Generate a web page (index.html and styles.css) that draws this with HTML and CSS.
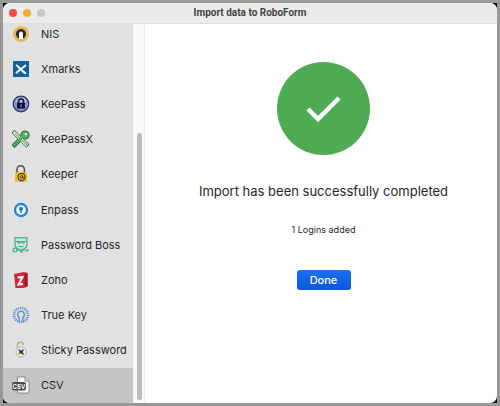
FILE: index.html
```
<!DOCTYPE html>
<html lang="en">
<head>
    <meta charset="UTF-8">
    <meta name="viewport" content="width=device-width, initial-scale=1.0">
    <title>Import data to RoboForm</title>
    <link rel="stylesheet" href="styles.css">
</head>
<body>
    <div class="backdrop">
        <div class="window">
            <header class="titlebar">
                <div class="controls">
                    <button class="dot close" aria-label="Close"></button>
                    <button class="dot minimize" aria-label="Minimize"></button>
                    <button class="dot zoom" aria-label="Zoom" disabled></button>
                </div>
                <h1 class="title">Import data to RoboForm</h1>
            </header>
            <div class="panes">
                <nav class="sidebar">
                    <div class="sources">
                        <a href="#" class="source">
                            <svg class="icon" viewBox="0 0 18 18"><circle cx="9" cy="9" r="8" fill="#edb55b"/><circle cx="9" cy="9" r="5" fill="#26272b"/><path d="M7 14V8.500a2 2 0 0 1 4 0V14z" fill="#fff"/></svg>
                            <span>NIS</span>
                        </a>
                        <a href="#" class="source">
                            <svg class="icon" viewBox="0 0 18 18"><path d="M1 1h16v16H1z" fill="#0c629b"/><path d="M4 5q1.500 1 5 4.500T14 13.500M4 13.500q1.500-2 5-4.500T14 5" fill="none" stroke="#fff" stroke-width="2"/></svg>
                            <span>Xmarks</span>
                        </a>
                        <a href="#" class="source">
                            <svg class="icon" viewBox="0 0 18 18"><circle cx="9" cy="9" r="7.800" fill="#8191d6" stroke="#35375a" stroke-width="1.200"/><path d="M3 7a6.300 6.300 0 0 1 12 0z" fill="#aeb9ea"/><path d="M6.500 8.500V6.500a2.500 2.500 0 0 1 5 0v2" fill="none" stroke="#10142e" stroke-width="1.600"/><path d="M5 8h8v5.500H5z" fill="#10142e"/><path d="M9 9.500v2.500" stroke="#9aa7e4"/></svg>
                            <span>KeePass</span>
                        </a>
                        <a href="#" class="source">
                            <svg class="icon" viewBox="0 0 18 18"><path d="M1 1.500l15 14.500M1 16.500l10-10" stroke="#3a5a40" stroke-width="4.400"/><circle cx="13" cy="5" r="4.600" fill="#3a5a40"/><path d="M1.700 2.200l13.600 13.200" stroke="#e2efe0" stroke-width="3"/><path d="M3 3.500l12 11.500" stroke="#4b9a52" stroke-width="1"/><path d="M1.700 15.800l10-10" stroke="#49b257" stroke-width="2.800"/><circle cx="13" cy="5" r="3.600" fill="#55b862"/><circle cx="14" cy="4" r="1.200" fill="#e4f3e2"/></svg>
                            <span>KeePassX</span>
                        </a>
                        <a href="#" class="source">
                            <svg class="icon" viewBox="0 0 18 18"><path d="M5 8V4.500a3.700 3.700 0 0 1 7.400 0V8" fill="none" stroke="#4b4b45" stroke-width="1.500"/><path d="M3 7.500h12V17H3z" fill="#f5bd20"/><circle cx="9.500" cy="12" r="3.600" fill="none" stroke="#4d3c0c" stroke-width="1.200"/><circle cx="9.300" cy="12" r="1.300" fill="none" stroke="#4d3c0c"/><path d="M10.800 10.500v2.500h1.500" fill="none" stroke="#4d3c0c"/></svg>
                            <span>Keeper</span>
                        </a>
                        <a href="#" class="source">
                            <svg class="icon" viewBox="0 0 18 18"><circle cx="9" cy="9" r="6" fill="#f5fafe" stroke="#1d84dc" stroke-width="2.300"/><circle cx="9" cy="7.800" r="2" fill="#1d74c4"/><path d="M9 8v4" stroke="#1d74c4" stroke-width="1.600"/></svg>
                            <span>Enpass</span>
                        </a>
                        <a href="#" class="source">
                            <svg class="icon" viewBox="0 0 18 18"><g fill="none" stroke="#3fae85" stroke-width="1.200"><path d="M3 1.500q3 1 6 0q3 1 6 0v7q0 4-6 5.500q-6-1.500-6-5.500z" fill="#d2e8de"/><path d="M3.500 5.500h11M6 5.500v1.500h2V5.500M10 5.500v1.500h2V5.500M6.500 10q2.500 1.500 5 0"/><circle cx="3" cy="14" r="1.900"/><path d="M5 14h3l1.500 2.500L11 14h6M15 14v2"/></g></svg>
                            <span>Password Boss</span>
                        </a>
                        <a href="#" class="source">
                            <svg class="icon" viewBox="0 0 18 18"><path d="M2 3l10-2 3.500 1v13L12 17H3.500z" fill="#d52436"/><path d="M12.500 3l3-1v13L13 16.500z" fill="#9d1424"/><path d="M5.500 6.500l5-.5-4 7.500 4.500-.5" fill="none" stroke="#fff" stroke-width="2"/></svg>
                            <span>Zoho</span>
                        </a>
                        <a href="#" class="source">
                            <svg class="icon" viewBox="0 0 18 18"><g fill="none" stroke="#5b93cd"><circle cx="9" cy="9" r="7" stroke-width="2.600" stroke-dasharray="1.100 .9"/><path d="M7.200 16V11.500a3.400 3.400 0 1 1 3.600 0V16" stroke-width="1.500"/></g></svg>
                            <span>True Key</span>
                        </a>
                        <a href="#" class="source">
                            <svg class="icon" viewBox="0 0 18 18"><path d="M5.500 7V4.500a3 3 0 0 1 6-.5" fill="none" stroke="#bda98d" stroke-width="1.400"/><circle cx="9" cy="11" r="5" fill="#f8fafb" stroke="#a5b1bb"/><path d="M9 11L6.500 8.500" stroke="#3475c6" stroke-width="1.800"/><path d="M9 11l2.500-2.500" stroke="#be3038" stroke-width="1.800"/><path d="M9 11l-2.500 2.500" stroke="#d28e22" stroke-width="1.800"/><path d="M9 11l2.500 2.500" stroke="#2f6c3d" stroke-width="1.800"/><circle cx="9" cy="11" r="1.300" fill="#17202b"/></svg>
                            <span>Sticky Password</span>
                        </a>
                        <a href="#" class="source selected" aria-current="true">
                            <svg class="icon" viewBox="0 0 18 18"><path d="M5.500 1h8L17 4.500V17H5.500z" fill="#f7f7f7" stroke="#73777a" stroke-width=".8"/><path d="M13 1v4h4" fill="#ddd" stroke="#73777a" stroke-width=".8"/><rect x="0" y="6" width="14" height="8.500" rx="2" fill="#464b50"/><text class="csv-tag" x="7" y="12.500" text-anchor="middle">CSV</text></svg>
                            <span>CSV</span>
                        </a>
                    </div>
                </nav>
                <div class="scrollbar"><div class="thumb"></div></div>
                <main class="result">
                    <svg class="success" viewBox="0 0 93 93"><circle cx="46.500" cy="46.500" r="46.500" fill="#4eab53"/><path d="M31 47l10 10 21-21" fill="none" stroke="#fff" stroke-width="4.500"/></svg>
                    <h2 class="message">Import has been successfully completed</h2>
                    <p class="count">1 Logins added</p>
                    <button class="done">Done</button>
                </main>
            </div>
        </div>
    </div>
</body>
</html>
```
FILE: styles.css
```
* {
    box-sizing: border-box;
}
body {
    margin: 0;
    background-color: #999;
    font-family: Inter, "Liberation Sans", sans-serif;
    color: #262626;
}
.backdrop {
    height: 100vh;
    padding: 3px;
    /* black shows only behind the rounded window corners */
    background: #000;
    background-clip: content-box;
}
.window {
    height: 100%;
    display: flex;
    flex-direction: column;
    border-radius: 7px;
    overflow: hidden;
    background-color: #fff;
}
.titlebar {
    display: grid;
    grid-template-columns: 1fr auto 1fr;
    align-items: center;
    height: 21px;
    flex: none;
    padding: 0 6px;
    background-color: #ebebeb;
    border-bottom: 1px solid #dedede;
}
.controls {
    display: flex;
    gap: 6px;
}
.dot {
    width: 8px;
    height: 8px;
    padding: 0;
    border: none;
    border-radius: 50%;
}
.close {
    background-color: #f74b4c;
}
.minimize {
    background-color: #f6ad35;
}
.zoom {
    background-color: #c8c8c8;
}
.title {
    margin: 0;
    font-family: Roboto, "Liberation Sans", sans-serif;
    font-size: 10px;
    line-height: 12px;
    font-weight: 700;
    color: #444;
}
.panes {
    display: flex;
    flex: 1;
    min-height: 0;
}
.sidebar {
    display: flex;
    flex-direction: column;
    justify-content: flex-end;
    width: 130px;
    flex: none;
    overflow: hidden;
    background-color: #e1e1e1;
}
/* list is scrolled to its end, so the first row is cut at the top */
.sources {
    display: flex;
    flex-direction: column;
    flex: none;
    height: calc(100% + 8px);
}
.source {
    display: flex;
    align-items: center;
    gap: 11px;
    flex: 1;
    padding-left: 9px;
    font-size: 11px;
    line-height: 14px;
    color: #262626;
    text-decoration: none;
    white-space: nowrap;
}
.source.selected {
    background-color: #c5c5c5;
}
.icon {
    width: 18px;
    height: 18px;
    flex: none;
}
.csv-tag {
    font-size: 6px;
    font-weight: 700;
    fill: #fff;
}
.scrollbar {
    display: flex;
    align-items: flex-end;
    justify-content: center;
    width: 12px;
    flex: none;
    padding-bottom: 3px;
    background-color: #fafafa;
    border-left: 1px solid #f2f2f2;
    border-right: 1px solid #ececec;
}
.thumb {
    width: 5px;
    height: 71%;
    border-radius: 3px;
    background-color: #bcbcbc;
}
.result {
    display: flex;
    flex-direction: column;
    align-items: center;
    flex: 1;
    padding: 38px 0 0 5px;
}
.success {
    width: 93px;
    height: 93px;
}
.message {
    margin: 27px 0 0;
    font-size: 13px;
    line-height: 18px;
    font-weight: 400;
}
.count {
    margin: 24px 0 0;
    font-size: 9px;
    line-height: 12px;
}
.done {
    margin-top: 34px;
    width: 54px;
    height: 20px;
    padding: 0;
    border: none;
    border-radius: 3px;
    background: linear-gradient(#1b70f2, #0b58db);
    font-family: inherit;
    font-size: 11px;
    font-weight: 500;
    color: #fff;
}
```
